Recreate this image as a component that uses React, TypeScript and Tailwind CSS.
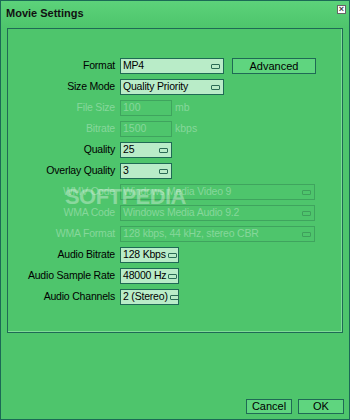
import React from 'react'

const font = { fontFamily: '"Liberation Sans", Arial, sans-serif' }

function Knob({ dim }: { dim?: boolean }) {
  return (
    <span
      className={`ml-auto mr-[3px] w-[9px] h-[5px] rounded-[1px] border ${dim ? 'border-[#3f9f5c]' : 'border-[#2b6b55]'} shrink-0`}
    />
  )
}

function Select({ value, w, dim }: { value: string; w: string; dim?: boolean }) {
  return (
    <div
      className={`${w} h-[16px] flex items-center border ${
        dim ? 'border-[#3fa45e] text-[#86d79b]' : 'border-[#1f6a55] bg-[#b9ecc8] text-black'
      }`}
    >
      <span className="pl-[2px] pr-[2px] whitespace-nowrap shrink-0 tracking-[-0.2px]">{value}</span>
      <Knob dim={dim} />
    </div>
  )
}

function Field({ value, unit, dim }: { value: string; unit: string; dim?: boolean }) {
  return (
    <div className="flex items-center gap-[3px]">
      <div
        className={`w-[52px] h-[16px] flex items-center border pl-[2px] ${
          dim ? 'border-[#3fa45e] text-[#86d79b]' : 'border-[#1f6a55] bg-[#b9ecc8]'
        }`}
      >
        {value}
      </div>
      <span className={dim ? 'text-[#86d79b]' : ''}>{unit}</span>
    </div>
  )
}

const rows: { label: string; dim?: boolean; el: React.ReactNode }[] = [
  {
    label: 'Format',
    el: (
      <div className="flex items-center gap-[8px]">
        <Select value="MP4" w="w-[104px]" />
        <button className="w-[84px] h-[16px] border border-[#1f6a55] bg-[#5fd57f] text-black text-[11px] leading-none">
          Advanced
        </button>
      </div>
    ),
  },
  { label: 'Size Mode', el: <Select value="Quality Priority" w="w-[104px]" /> },
  { label: 'File Size', dim: true, el: <Field value="100" unit="mb" dim /> },
  { label: 'Bitrate', dim: true, el: <Field value="1500" unit="kbps" dim /> },
  { label: 'Quality', el: <Select value="25" w="w-[52px]" /> },
  { label: 'Overlay Quality', el: <Select value="3" w="w-[52px]" /> },
  { label: 'WMV Code', dim: true, el: <Select value="Windows Media Video 9" w="w-[195px]" dim /> },
  { label: 'WMA Code', dim: true, el: <Select value="Windows Media Audio 9.2" w="w-[195px]" dim /> },
  { label: 'WMA Format', dim: true, el: <Select value="128 kbps, 44 kHz, stereo CBR" w="w-[195px]" dim /> },
  { label: 'Audio Bitrate', el: <Select value="128 Kbps" w="w-[59px]" /> },
  { label: 'Audio Sample Rate', el: <Select value="48000 Hz" w="w-[59px]" /> },
  { label: 'Audio Channels', el: <Select value="2 (Stereo)" w="w-[59px]" /> },
]

export default function App() {
  return (
    <div
      className="w-[350px] h-[420px] bg-[#4ec56c] border border-[#1b6a55] flex flex-col text-[10.5px] text-black relative overflow-hidden"
      style={font}
    >
      <div className="h-[26px] flex items-start justify-between pl-[5px] pr-[3px] pt-[4px] bg-gradient-to-b from-[#5cd27a] to-[#4ec56c]">
        <span className="font-bold text-[11px] text-[#111]">Movie Settings</span>
        <span className="w-[9px] h-[9px] bg-white border border-[#666] flex items-center justify-center text-[9px] leading-none font-bold text-[#444]">
          ×
        </span>
      </div>

      <div className="mx-[6px] mt-px h-[305px] border border-[#1f6a55] shadow-[inset_-1px_-1px_0_#7fdc98] pt-[29px]">
        <div className="flex flex-col gap-[5px]">
          {rows.map((r) => (
            <div key={r.label} className="flex items-center h-[16px]">
              <div
                className={`w-[112px] text-right pr-[5px] whitespace-nowrap tracking-[-0.2px] ${r.dim ? 'text-[#86d79b]' : ''}`}
              >
                {r.label}
              </div>
              {r.el}
            </div>
          ))}
        </div>
      </div>

      <div className="flex-1" />
      <div className="flex justify-end gap-[6px] pr-[5px] pb-[5px]">
        <button className="w-[46px] h-[15px] border border-[#1f6a55] bg-[#5fd57f] text-[11px] leading-none">Cancel</button>
        <button className="w-[46px] h-[15px] border border-[#1f6a55] bg-[#5fd57f] text-[11px] leading-none">OK</button>
      </div>

      <div className="absolute left-[64px] top-[179px] text-[22px] font-bold text-white/35 tracking-tight pointer-events-none">
        SOFTPEDIA
      </div>
    </div>
  )
}
